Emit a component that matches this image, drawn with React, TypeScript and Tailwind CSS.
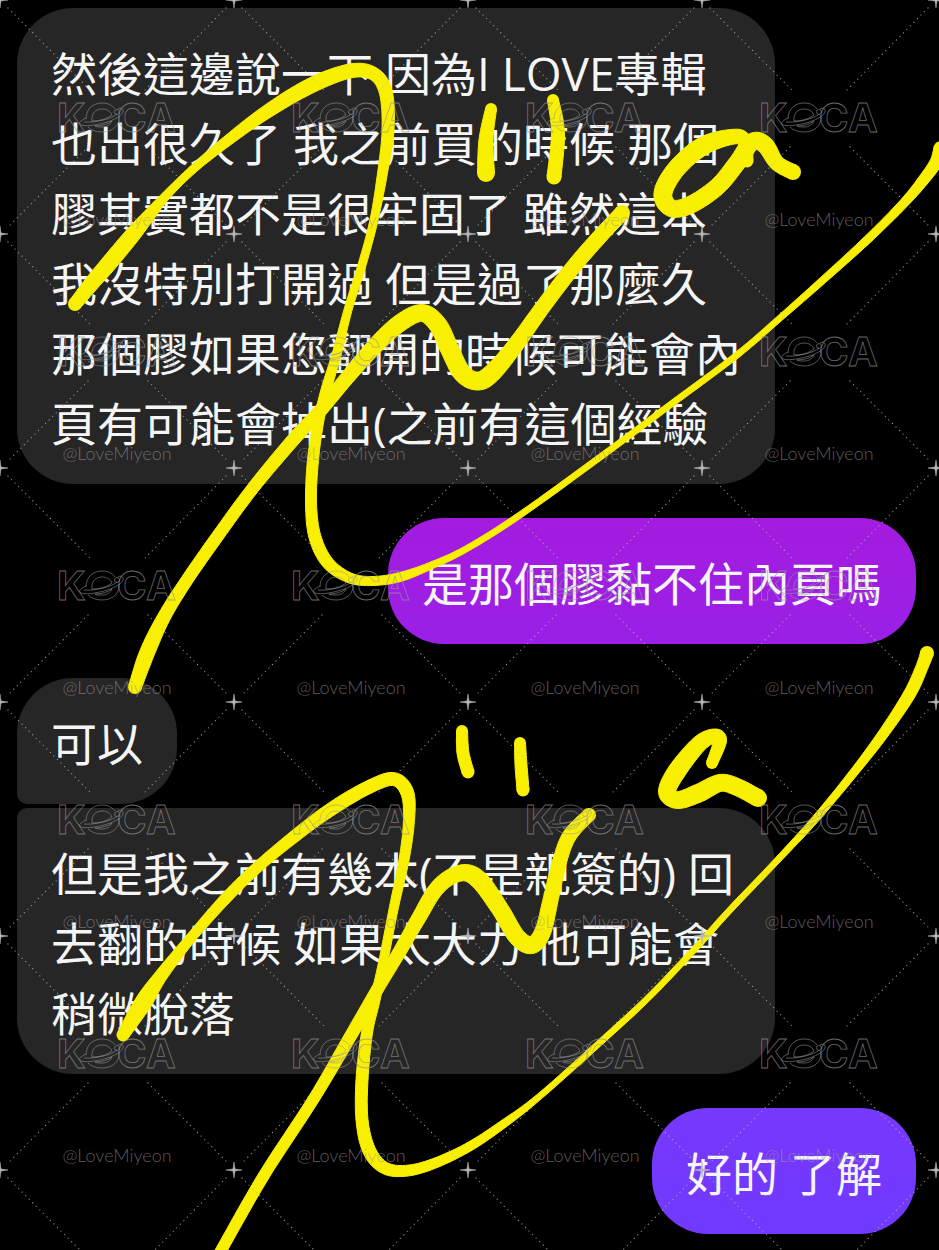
import clsx from 'clsx';

type Side = 'in' | 'out';
type Point = [x: number, y: number, width: number];

interface Message {
    id: number;
    side: Side;
    text: string;
    shape: string;
}

const messages: Message[] = [
    {
        id: 1,
        side: 'in',
        text: '然後這邊說一下 因為I LOVE專輯也出很久了 我之前買的時候 那個膠其實都不是很牢固了 雖然這本我沒特別打開過 但是過了那麼久那個膠如果您翻開的時候可能會內頁有可能會掉出(之前有這個經驗',
        shape: 'rounded-[56px] bg-[#262626]',
    },
    {
        id: 2,
        side: 'out',
        text: '是那個膠黏不住內頁嗎',
        shape: 'mt-[34px] rounded-[56px] bg-linear-to-b from-[#a31bde] to-[#9a20e7]',
    },
    {
        id: 3,
        side: 'in',
        text: '可以',
        shape: 'mt-[34px] rounded-[56px] rounded-bl-[10px] bg-[#262626]',
    },
    {
        id: 4,
        side: 'in',
        text: '但是我之前有幾本(不是親簽的) 回去翻的時候 如果太大力 他可能會稍微脫落',
        shape: 'mt-1 rounded-[56px] rounded-tl-[10px] bg-[#262626]',
    },
    {
        id: 5,
        side: 'out',
        text: '好的 了解',
        shape: 'mt-[34px] rounded-[56px] bg-linear-to-b from-[#7638fb] to-[#7139ff]',
    },
];

// Pen strokes: centre line plus pen width at each point
const strokes: Point[][] = [
    [
        [75, 304, 13], [92, 283, 15], [110, 262, 16], [135, 232, 15], [163, 199, 9], [190, 172, 8], [222, 145, 10],
        [265, 113, 13], [310, 86, 15], [350, 71, 14], [374, 74, 13], [386, 93, 13], [388, 130, 12], [383, 170, 10],
        [374, 220, 8], [362, 265, 8], [348, 310, 8], [337, 353, 9], [326, 390, 10], [319, 420, 10], [313, 460, 11],
        [311, 503, 11], [315, 537, 12], [328, 563, 12], [350, 578, 10], [373, 581, 9], [400, 577, 9], [430, 566, 7],
        [466, 549, 6], [520, 515, 6], [603, 455, 6], [670, 405, 6], [737, 355, 6], [780, 318, 6], [823, 280, 7],
        [867, 240, 8], [904, 203, 9], [925, 178, 11], [936, 162, 12], [940, 148, 12],
    ],
    [
        [135, 687, 13], [147, 653, 15], [164, 617, 13], [187, 580, 12], [217, 537, 12], [253, 488, 12], [293, 440, 13],
        [320, 411, 13], [347, 378, 14], [375, 346, 16], [400, 323, 17], [422, 313, 17], [438, 325, 18], [450, 350, 18],
        [462, 373, 18], [477, 381, 18], [491, 374, 18], [514, 347, 16], [545, 304, 15], [575, 265, 15], [603, 233, 15],
        [622, 213, 15],
    ],
    [[491, 109, 11], [486, 140, 14], [486, 173, 17]],
    [[553, 100, 11], [558, 133, 13], [554, 177, 14]],
    [
        [747, 161, 12], [744, 140, 14], [731, 137, 15], [703, 146, 18], [677, 168, 18], [663, 193, 18], [671, 208, 17],
        [690, 205, 17], [717, 187, 17], [737, 163, 17], [752, 142, 17], [765, 145, 17], [777, 163, 15], [793, 172, 15],
    ],
    [
        [123, 1035, 12], [143, 1003, 17], [160, 977, 13], [190, 939, 10], [227, 897, 11], [260, 865, 11],
        [300, 832, 12], [333, 808, 13], [367, 788, 13], [393, 779, 13], [407, 792, 13], [409, 820, 11], [404, 860, 10],
        [394, 907, 9], [383, 963, 9], [375, 1000, 10], [367, 1033, 11], [362, 1080, 12], [362, 1120, 12],
        [369, 1150, 13], [383, 1167, 12], [403, 1171, 11], [430, 1165, 10], [467, 1148, 9], [502, 1125, 8],
        [540, 1096, 6], [606, 1037, 6], [648, 998, 6], [692, 952, 6], [729, 911, 6], [771, 867, 6], [811, 824, 7],
        [847, 781, 8], [881, 737, 10], [909, 695, 12], [922, 667, 12], [927, 653, 13],
    ],
    [
        [218, 1256, 11], [263, 1177, 11], [313, 1100, 11], [350, 1037, 12], [377, 990, 12], [400, 951, 13],
        [417, 921, 14], [438, 887, 15], [461, 873, 16], [479, 880, 18], [500, 909, 17], [517, 937, 17], [532, 945, 17],
        [543, 931, 16], [551, 898, 15], [560, 860, 14], [570, 835, 14], [589, 815, 13],
    ],
    [[462, 731, 11], [463, 753, 12], [468, 772, 12]],
    [[520, 743, 11], [521, 765, 12], [523, 790, 12]],
    [
        [712, 763, 11], [720, 741, 13], [714, 736, 14], [699, 744, 16], [677, 771, 18], [667, 792, 17], [678, 800, 17],
        [699, 793, 18], [720, 783, 17], [737, 787, 17], [758, 798, 17],
    ],
];

const STEPS = 8;

function spline(a: number, b: number, c: number, d: number, t: number) {
    return 0.5 * (2 * b + (c - a) * t + (2 * a - 5 * b + 4 * c - d) * t * t + (3 * b - a - 3 * c + d) * t * t * t);
}

function smooth(points: Point[]): Point[] {
    const out: Point[] = [];
    for (let i = 0; i < points.length - 1; i++) {
        const p = [points[Math.max(i - 1, 0)], points[i], points[i + 1], points[Math.min(i + 2, points.length - 1)]];
        for (let s = 0; s < STEPS; s++) {
            const [x, y, w] = [0, 1, 2].map((k) => spline(p[0][k], p[1][k], p[2][k], p[3][k], s / STEPS));
            out.push([x, y, w]);
        }
    }
    out.push(points[points.length - 1]);
    return out;
}

// Turns a centre line into a closed ribbon
function ribbon(points: Point[]) {
    const line = smooth(points);
    const left: string[] = [];
    const right: string[] = [];
    line.forEach(([x, y, w], i) => {
        const [ax, ay] = line[Math.max(i - 1, 0)];
        const [bx, by] = line[Math.min(i + 1, line.length - 1)];
        const len = Math.hypot(bx - ax, by - ay) || 1;
        const nx = (-(by - ay) / len) * (w / 2);
        const ny = ((bx - ax) / len) * (w / 2);
        left.push(`${(x + nx).toFixed(1)} ${(y + ny).toFixed(1)}`);
        right.unshift(`${(x - nx).toFixed(1)} ${(y - ny).toFixed(1)}`);
    });
    return `M${left.concat(right).join('L')}Z`;
}

function PenStroke({ points }: { points: Point[] }) {
    const ends = [points[0], points[points.length - 1]];
    return (
        <g>
            <path d={ribbon(points)} stroke="#f9ef00" strokeWidth="1" strokeLinejoin="round" />
            {ends.map(([x, y, w], i) => (
                <circle key={i} cx={x} cy={y} r={w / 2 + 0.5} />
            ))}
        </g>
    );
}

function WatermarkLabel() {
    return (
        <>
            <g fill="none" stroke="#98989c" strokeOpacity="0.7" strokeWidth="0.8">
                <g fontFamily="Inter, sans-serif" fontSize="40" fontWeight="700">
                    <text x="57" y="132">K</text>
                    <text x="117" y="132">C</text>
                    <text x="146" y="132">A</text>
                </g>
                {/* Planet */}
                <path d="M86 119C86 109 93 103 102 103c6 0 10 2 13 6M119 116c1 10-7 16-17 16-6 0-11-2-14-5" />
                <path d="M92 121c-1-8 4-12 10-12 5 0 8 2 10 6-5 4-12 6-20 6ZM95 126c7 0 13-2 17-5-2 4-5 6-10 6-3 0-5 0-7-1Z" />
                <path d="M86 118c-6 3-8 5-5 7 8 3 39-4 42-13 1-3-2-5-5-3M84 122c10 1 28-3 33-8" />
                <circle cx="117" cy="112" r="2.5" />
            </g>
            <text
                x="117"
                y="226"
                textAnchor="middle"
                fontFamily="Lato, sans-serif"
                fontSize="18"
                fontWeight="300"
                fill="#9a9a9e"
                fillOpacity="0.6"
            >
                @LoveMiyeon
            </text>
        </>
    );
}

function WatermarkTile({ x, y, label }: { x: number; y: number; label: boolean }) {
    return (
        <g transform={`translate(${x} ${y})`}>
            <g stroke="#c0c0c0" strokeOpacity="0.75" strokeWidth="1.3" strokeLinecap="round" strokeDasharray="0 5">
                <path d="M8 8 90 90M226 8 145 90M88 147 8 227M148 147 228 227" />
            </g>
            <path d="M0-8 1-1 8 0 1 1 0 8-1 1-8 0-1-1Z" fill="#b8b8bc" stroke="#b8b8bc" strokeWidth="0.5" />
            {label && <WatermarkLabel />}
        </g>
    );
}

function Watermark() {
    const columns = [0, 1, 2, 3, 4];
    const rows = [0, 1, 2, 3, 4, 5];
    return (
        <svg className="pointer-events-none absolute inset-0 h-full w-full" aria-hidden="true">
            {rows.map((row) =>
                columns.map((col) => (
                    <WatermarkTile key={`${row}-${col}`} x={col * 234} y={row * 234} label={col < 4 && row < 5} />
                ))
            )}
        </svg>
    );
}

function Scribble() {
    return (
        <svg
            className="pointer-events-none absolute top-0 left-0 w-full"
            viewBox="0 0 939 1250"
            fill="#f9ef00"
            aria-hidden="true"
        >
            {strokes.map((points, i) => (
                <PenStroke key={i} points={points} />
            ))}
        </svg>
    );
}

function Bubble({ message }: { message: Message }) {
    return (
        <li
            className={clsx(
                'max-w-[758px] px-[34px] pt-[30px] pb-[26px] text-[46px] leading-[70px] text-[#f5f5f5]',
                message.side === 'in' ? 'self-start' : 'self-end',
                message.shape
            )}
        >
            <p>{message.text}</p>
        </li>
    );
}

export default function App() {
    return (
        <main
            lang="zh-Hant"
            className="relative min-h-screen overflow-hidden bg-black font-['Open_Sans','Noto_Sans_CJK_TC',sans-serif]"
        >
            <ul className="flex flex-col pt-2 pr-[23px] pb-4 pl-[17px]">
                {messages.map((message) => (
                    <Bubble key={message.id} message={message} />
                ))}
            </ul>
            <Scribble />
            <Watermark />
        </main>
    );
}
